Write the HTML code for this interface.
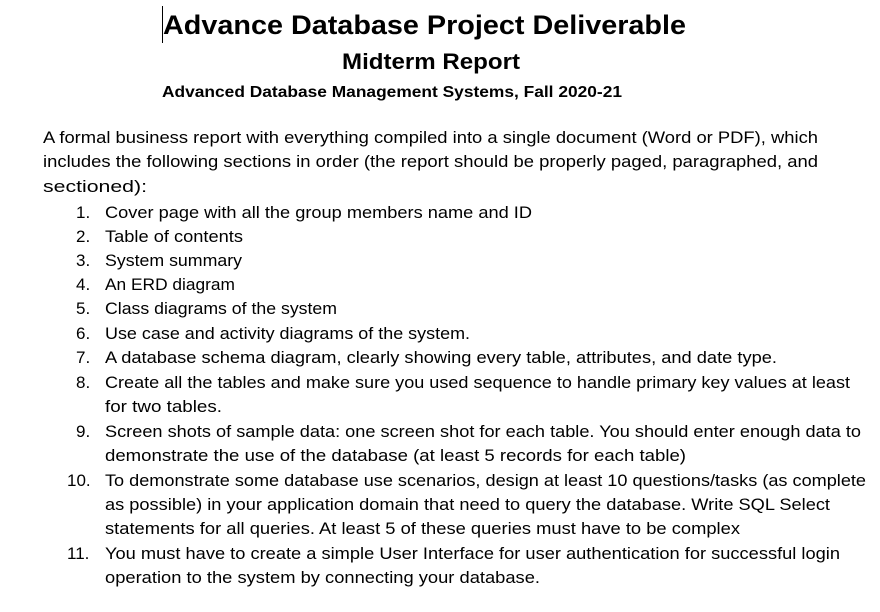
<!DOCTYPE html>
<html><head><meta charset="utf-8"><style>
html,body{margin:0;padding:0;background:#fff;width:880px;height:612px;overflow:hidden}
svg{display:block}
text{font-family:"Liberation Sans",sans-serif;fill:#000}
.b{font-weight:bold}
.t{font-size:17px}
</style></head><body>
<svg width="880" height="612" xmlns="http://www.w3.org/2000/svg">
<rect x="162" y="6" width="1" height="37" fill="#000"/>
<text class="b" x="163" y="34" font-size="27" textLength="523" lengthAdjust="spacingAndGlyphs">Advance Database Project Deliverable</text>
<text class="b" x="342" y="69" font-size="22" textLength="178" lengthAdjust="spacingAndGlyphs">Midterm Report</text>
<text class="b" x="162" y="97" font-size="16" textLength="460" lengthAdjust="spacingAndGlyphs">Advanced Database Management Systems, Fall 2020-21</text>
<g class="t">
<text x="43" y="143" textLength="775" lengthAdjust="spacingAndGlyphs">A formal business report with everything compiled into a single document (Word or PDF), which</text>
<text x="43" y="167" textLength="775" lengthAdjust="spacingAndGlyphs">includes the following sections in order (the report should be properly paged, paragraphed, and</text>
<text x="43" y="192" textLength="104" lengthAdjust="spacingAndGlyphs">sectioned):</text>
<text x="76" y="218">1.</text><text x="105" y="218" textLength="427" lengthAdjust="spacingAndGlyphs">Cover page with all the group members name and ID</text>
<text x="76" y="242">2.</text><text x="105" y="242" textLength="138" lengthAdjust="spacingAndGlyphs">Table of contents</text>
<text x="76" y="266">3.</text><text x="105" y="266" textLength="137" lengthAdjust="spacingAndGlyphs">System summary</text>
<text x="76" y="290">4.</text><text x="105" y="290" textLength="130" lengthAdjust="spacingAndGlyphs">An ERD diagram</text>
<text x="76" y="314">5.</text><text x="105" y="314" textLength="232" lengthAdjust="spacingAndGlyphs">Class diagrams of the system</text>
<text x="76" y="339">6.</text><text x="105" y="339" textLength="365" lengthAdjust="spacingAndGlyphs">Use case and activity diagrams of the system.</text>
<text x="76" y="363">7.</text><text x="105" y="363" textLength="672" lengthAdjust="spacingAndGlyphs">A database schema diagram, clearly showing every table, attributes, and date type.</text>
<text x="76" y="388">8.</text><text x="105" y="388" textLength="745" lengthAdjust="spacingAndGlyphs">Create all the tables and make sure you used sequence to handle primary key values at least</text>
<text x="105" y="412" textLength="117" lengthAdjust="spacingAndGlyphs">for two tables.</text>
<text x="76" y="437">9.</text><text x="105" y="437" textLength="756" lengthAdjust="spacingAndGlyphs">Screen shots of sample data: one screen shot for each table. You should enter enough data to</text>
<text x="105" y="461" textLength="581" lengthAdjust="spacingAndGlyphs">demonstrate the use of the database (at least 5 records for each table)</text>
<text x="67" y="486">10.</text><text x="105" y="486" textLength="761" lengthAdjust="spacingAndGlyphs">To demonstrate some database use scenarios, design at least 10 questions/tasks (as complete</text>
<text x="105" y="510" textLength="725" lengthAdjust="spacingAndGlyphs">as possible) in your application domain that need to query the database. Write SQL Select</text>
<text x="105" y="534" textLength="635" lengthAdjust="spacingAndGlyphs">statements for all queries. At least 5 of these queries must have to be complex</text>
<text x="67" y="559">11.</text><text x="105" y="559" textLength="735" lengthAdjust="spacingAndGlyphs">You must have to create a simple User Interface for user authentication for successful login</text>
<text x="105" y="583" textLength="435" lengthAdjust="spacingAndGlyphs">operation to the system by connecting your database.</text>
</g>
</svg>
</body></html>
